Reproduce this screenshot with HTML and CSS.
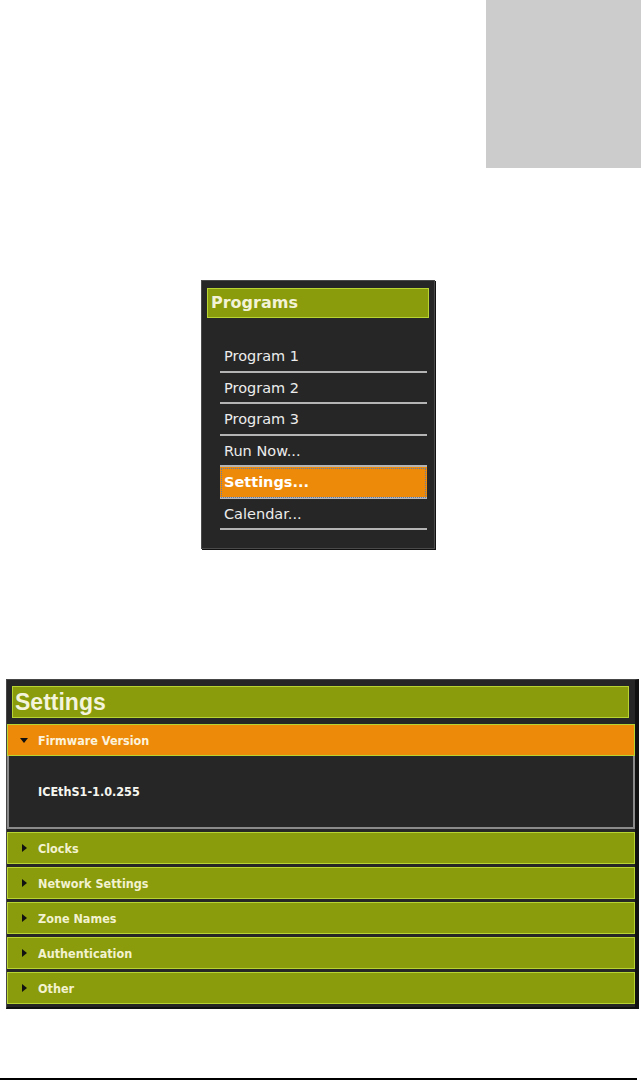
FILE: index.html
```html
<!DOCTYPE html>
<html lang="en">
<head>
    <meta charset="UTF-8">
    <title>Settings</title>
<link rel="stylesheet" href="styles.css">
</head>
<body>
	<div class="top">
		<div class="grey"></div>
	</div>

	<!-- programs menu -->
	<div class="programs">
		<h3>Programs</h3>
		<ul>
			<li>Program 1</li>
			<li>Program 2</li>
			<li>Program 3</li>
			<li>Run Now...</li>
			<li class="active">Settings...</li>
			<li>Calendar...</li>
		</ul>
	</div>

	<!-- settings accordion -->
	<div class="settings">
		<h2>Settings</h2>
		<div class="acc open">
			<div class="acc-head">Firmware Version</div>
			<div class="acc-body">ICEthS1-1.0.255</div>
		</div>
		<div class="acc"><div class="acc-head">Clocks</div></div>
		<div class="acc"><div class="acc-head">Network Settings</div></div>
		<div class="acc"><div class="acc-head">Zone Names</div></div>
		<div class="acc"><div class="acc-head">Authentication</div></div>
		<div class="acc"><div class="acc-head">Other</div></div>
	</div>

	<div class="rule"></div>
</body>
</html>
```

FILE: styles.css
```css
*{padding:0;margin:0;list-style:none;box-sizing:border-box;}
body{background:#fff;font-family:"DejaVu Sans",Verdana,sans-serif;}

.top{
	display:flex;
	justify-content:flex-end;
	height:168px;
}
.grey{
	width:155px;
	background:#cccccc;
}

.programs{
	width:234px;
	height:269px;
	margin:112px 0 0 201px;
	padding:7px 5px 0 5px;
	background:#262626;
	border:1px solid #4a4a4a;
	box-shadow:1px 1px 0 #111;
}
.programs>h3{
	height:30px;
	padding-left:3px;
	background:#8a9b0b;
	border:1px solid #b8d432;
	color:#f2f2d6;
	font-size:16px;
	font-weight:bold;
	line-height:28px;
}
.programs>ul{
	margin:23px 2px 0 13px;
}
.programs li{
	height:31.5px;
	padding-left:4px;
	border-bottom:2px solid #b4b4b4;
	color:#ececec;
	font-size:14.5px;
	line-height:31px;
}
.programs li.active{
	background:#ee8a0a;
	color:#fff;
	font-weight:bold;
	outline:1px dotted #5a7ab0;
	outline-offset:-2px;
}

.settings{
	width:633px;
	margin:130px 0 0 6px;
	padding:6px 0 3px 0;
	background:#262626;
	border:1px solid #464646;
	border-right:4px solid #111;
	border-bottom:2px solid #111;
}
.settings>h2{
	height:32px;
	margin:0 6px 6px 5px;
	padding-left:2px;
	background:#8a9b0b;
	border:1px solid #b8d432;
	color:#f4f4dc;
	font-family:"Liberation Sans",Arial,sans-serif;
	font-size:23px;
	font-weight:bold;
	line-height:30px;
}
.acc+.acc{margin-top:3px;}
.acc-head{
	height:32px;
	display:flex;
	align-items:center;
	padding-left:14px;
	background:#8a9b0b;
	border:1px solid #b8d432;
	color:#f2f2d0;
	font-family:"DejaVu Sans Condensed","DejaVu Sans",sans-serif;
	font-stretch:condensed;
	font-size:12.5px;
	font-weight:bold;
}
.acc-head::before{
	content:"";
	width:0;
	height:0;
	margin-right:11px;
	border-top:4px solid transparent;
	border-bottom:4px solid transparent;
	border-left:5px solid #111;
}
.open>.acc-head{
	padding-left:12px;
	background:#ee8a0a;
	color:#fbf3dc;
}
.open>.acc-head::before{
	margin-right:10px;
	border-left:4px solid transparent;
	border-right:4px solid transparent;
	border-top:5px solid #111;
	border-bottom:0;
}
.acc-body{
	height:73px;
	padding-left:29px;
	background:#262626;
	border:2px solid #8a8a8a;
	border-top:0;
	color:#f6f6f0;
	font-family:"DejaVu Sans Condensed","DejaVu Sans",sans-serif;
	font-stretch:condensed;
	font-size:12.5px;
	font-weight:bold;
	line-height:72px;
}

.rule{
	width:637px;
	height:2px;
	margin-top:69px;
	background:#000;
}
```
